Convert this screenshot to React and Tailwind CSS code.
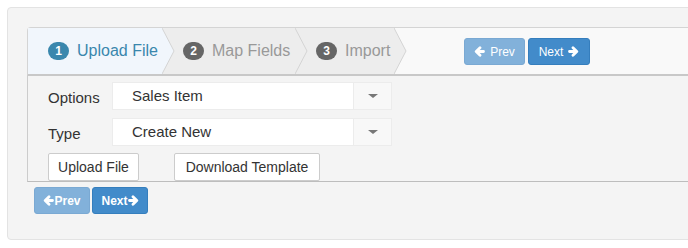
const font = { fontFamily: '"Liberation Sans", Arial, sans-serif' }

function Arrow({ dir }) {
    return (
        <svg width="11" height="11" viewBox="0 0 11 11" className={dir === 'left' ? 'rotate-180' : ''}>
            <path d="M1.5 5.5H8.5M5 1.8L8.8 5.5L5 9.2" fill="none" stroke="white" strokeWidth="2.8" strokeLinecap="round" strokeLinejoin="round" />
        </svg>
    )
}

function Chevron({ bg }) {
    return (
        <svg className="absolute top-0 -right-[12px] z-10" width="13" height="46" viewBox="0 0 13 46">
            <polygon points="0,0 12,23 0,46" fill={bg} />
            <polyline points="0,0 12,23 0,46" fill="none" stroke="#d4d4d4" strokeWidth="1" />
        </svg>
    )
}

function Step({ n, label, active, width, bg }) {
    return (
        <div className={`relative h-[46px] flex items-center pl-[20px] ${width}`} style={{ background: bg }}>
            <span
                className={`h-[18px] min-w-[21px] px-[7px] rounded-[10px] text-[12px] font-bold text-white flex items-center justify-center mr-[8px] ${active ? 'bg-[#3a87ad]' : 'bg-[#666666]'}`}
            >
                {n}
            </span>
            <span className={`text-[16px] ${active ? 'text-[#3a87ad]' : 'text-[#999999]'}`}>{label}</span>
            <Chevron bg={bg} />
        </div>
    )
}

function Select({ value }) {
    return (
        <div className="w-[280px] h-[28px] flex bg-white border border-[#ececec]">
            <div className="flex-1 flex items-center pl-[19px] text-[15px] text-[#333333]">{value}</div>
            <div className="w-[38px] flex items-center justify-center border-l border-[#ececec] bg-[#f8f8f8]">
                <span className="w-0 h-0 border-l-[5px] border-r-[5px] border-t-[4px] border-l-transparent border-r-transparent border-t-[#777777]" />
            </div>
        </div>
    )
}

export default function App() {
    return (
        <div className="w-[688px] h-[248px] overflow-hidden bg-white pt-[7px] pl-[7px]" style={font}>
            <div className="w-[760px] h-[233px] bg-[#f4f4f4] border border-[#e3e3e3] rounded-[4px] pt-[19px] pl-[19px]">
                <div className="border-t border-l border-b-2 border-t-[#d4d4d4] border-l-[#d4d4d4] border-b-[#c8c8c8] rounded-tl-[4px] bg-[#f9f9f9] flex items-center">
                    <Step n="1" label="Upload File" active width="w-[135px]" bg="#f1f6fc" />
                    <Step n="2" label="Map Fields" width="w-[133px]" bg="#ededed" />
                    <Step n="3" label="Import" width="w-[99px]" bg="#ededed" />
                    <div className="flex items-center gap-[3px] pl-[69px] pt-[1px]">
                        <button className="h-[27px] w-[61px] rounded-[3px] bg-[#82b1da] border border-[#7aa9d3] text-white text-[12px] flex items-center justify-center gap-[5px]">
                            <Arrow dir="left" />
                            Prev
                        </button>
                        <button className="h-[27px] w-[62px] rounded-[3px] bg-[#428bca] border border-[#357ebd] text-white text-[12px] flex items-center justify-center gap-[5px]">
                            Next
                            <Arrow dir="right" />
                        </button>
                    </div>
                </div>

                <div className="border-l border-b border-l-[#cccccc] border-b-[#bdbdbd] pl-[20px] pt-[6px] flex flex-col">
                    <div className="flex items-center h-[28px]">
                        <div className="w-[64px] text-[15px] text-[#333333] pt-[5px]">Options</div>
                        <Select value="Sales Item" />
                    </div>
                    <div className="flex items-center h-[28px] mt-[8px]">
                        <div className="w-[64px] text-[15px] text-[#333333] pt-[5px]">Type</div>
                        <Select value="Create New" />
                    </div>
                    <div className="flex h-[28px] mt-[7px] gap-[35px]">
                        <button className="w-[91px] h-[28px] bg-white border border-[#cccccc] rounded-[2px] text-[14px] text-[#333333]">
                            Upload File
                        </button>
                        <button className="w-[146px] h-[28px] bg-white border border-[#cccccc] rounded-[2px] text-[14px] text-[#333333]">
                            Download Template
                        </button>
                    </div>
                </div>

                <div className="flex gap-[2px] mt-[5px] ml-[7px]">
                    <button className="h-[27px] w-[56px] rounded-[3px] bg-[#82b1da] border border-[#7aa9d3] text-white text-[12px] font-bold flex items-center justify-center">
                        <Arrow dir="left" />
                        Prev
                    </button>
                    <button className="h-[27px] w-[56px] rounded-[3px] bg-[#428bca] border border-[#357ebd] text-white text-[12px] font-bold flex items-center justify-center">
                        Next
                        <Arrow dir="right" />
                    </button>
                </div>
            </div>
        </div>
    )
}
